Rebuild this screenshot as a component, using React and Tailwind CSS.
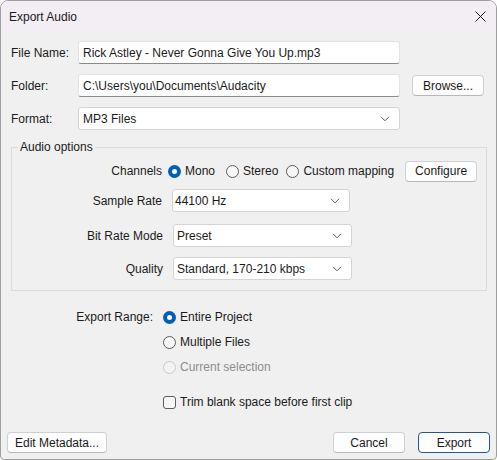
import React from 'react';

const Chevron = () => (
  <svg width="10" height="6" viewBox="0 0 10 6" className="shrink-0">
    <path d="M1 0.8l4 4 4-4" stroke="#5f5f5f" strokeWidth="1" fill="none" />
  </svg>
);

const TextField = ({ value, className = '' }) => (
  <div
    className={`h-[23px] bg-white border border-[#e3e3e3] border-b-[#8a8a8a] rounded-[3px] flex items-center pl-[4px] ${className}`}
  >
    {value}
  </div>
);

const Select = ({ value, className = '', pad = 'pl-[4px] pr-[9px]' }) => (
  <div
    className={`h-[23px] bg-white border border-[#d4d4d4] rounded-[3px] flex items-center justify-between ${pad} ${className}`}
  >
    <span>{value}</span>
    <Chevron />
  </div>
);

const Button = ({ children, className = '', primary = false }) => (
  <button
    className={`h-[21px] rounded-[4px] border flex items-center justify-center leading-none ${
      primary ? 'bg-[#fdfdfd] border-[#1f5a94]' : 'bg-[#fdfdfd] border-[#d0d0d0] border-b-[#b8b8b8]'
    } ${className}`}
  >
    {children}
  </button>
);

const Radio = ({ checked = false, disabled = false }) =>
  checked ? (
    <span className="w-[13px] h-[13px] rounded-full bg-[#005fb8] flex items-center justify-center shrink-0">
      <span className="w-[5px] h-[5px] rounded-full bg-white" />
    </span>
  ) : (
    <span
      className={`w-[13px] h-[13px] rounded-full border shrink-0 ${
        disabled ? 'border-[#c9c9c9] bg-[#f3f3f3]' : 'border-[#5c5c5c] bg-[#f6f6f6]'
      }`}
    />
  );

const RadioItem = ({ label, checked, disabled, className = '' }) => (
  <div className={`flex items-center gap-[4px] whitespace-nowrap ${disabled ? 'text-[#8e8e8e]' : ''} ${className}`}>
    <Radio checked={checked} disabled={disabled} />
    <span>{label}</span>
  </div>
);

export default function App() {
  return (
    <div className="w-[497px] h-[460px] bg-[#f0f0f0] border border-[#9e9e9e] rounded-t-[8px] rounded-b-[4px] overflow-hidden flex flex-col text-[12px] leading-[16px] text-[#1b1b1b] font-['Liberation_Sans',Arial,sans-serif]">
      {/* Title bar */}
      <div className="h-[31px] shrink-0 bg-[#f3eef3] flex items-center justify-between pl-[8px] pr-[10px]">
        <span>Export Audio</span>
        <svg width="11" height="11" viewBox="0 0 11 11">
          <path d="M0.5 0.5l10 10M10.5 0.5l-10 10" stroke="#1b1b1b" strokeWidth="1" />
        </svg>
      </div>

      {/* File name */}
      <div className="flex items-center h-[23px] mt-[9px] pl-[10px]">
        <span className="w-[67px]">File Name:</span>
        <TextField value="Rick Astley - Never Gonna Give You Up.mp3" className="w-[322px]" />
      </div>

      {/* Folder */}
      <div className="flex items-center h-[23px] mt-[10px] pl-[10px]">
        <span className="w-[67px]">Folder:</span>
        <TextField value="C:\Users\you\Documents\Audacity" className="w-[322px]" />
        <Button className="w-[72px] ml-[12px]">Browse...</Button>
      </div>

      {/* Format */}
      <div className="flex items-center h-[23px] mt-[10px] pl-[10px]">
        <span className="w-[67px]">Format:</span>
        <Select value="MP3 Files" className="w-[322px]" />
      </div>

      {/* Audio options */}
      <fieldset className="ml-[10px] w-[476px] h-[152px] mt-[9px] border border-[#dcdcdc] box-border">
        <legend className="ml-[6px] px-[2px]">Audio options</legend>

        <div className="flex items-center h-[20px] mt-[6px] whitespace-nowrap">
          <span className="w-[150px] text-right">Channels</span>
          <RadioItem label="Mono" checked className="ml-[6px]" />
          <RadioItem label="Stereo" className="ml-[11px]" />
          <RadioItem label="Custom mapping" className="ml-[8px]" />
          <Button className="w-[72px] h-[20px] ml-[11px] shrink-0">Configure</Button>
        </div>

        <div className="flex items-center h-[23px] mt-[8px]">
          <span className="w-[150px] text-right">Sample Rate</span>
          <Select value="44100 Hz" className="w-[178px] ml-[10px]" pad="pl-[2px] pr-[9px]" />
        </div>

        <div className="flex items-center h-[23px] mt-[12px]">
          <span className="w-[151px] text-right">Bit Rate Mode</span>
          <Select value="Preset" className="w-[179px] ml-[10px]" pad="pl-[3px] pr-[9px]" />
        </div>

        <div className="flex items-center h-[23px] mt-[10px]">
          <span className="w-[151px] text-right">Quality</span>
          <Select value="Standard, 170-210 kbps" className="w-[179px] ml-[10px]" pad="pl-[3px] pr-[9px]" />
        </div>
      </fieldset>

      {/* Export range */}
      <div className="flex items-center h-[20px] mt-[16px]">
        <span className="w-[152px] text-right">Export Range:</span>
        <RadioItem label="Entire Project" checked className="ml-[10px]" />
      </div>
      <div className="flex items-center h-[20px] mt-[5px] pl-[162px]">
        <RadioItem label="Multiple Files" />
      </div>
      <div className="flex items-center h-[20px] mt-[5px] pl-[162px]">
        <RadioItem label="Current selection" disabled />
      </div>
      <div className="flex items-center gap-[4px] h-[20px] mt-[15px] pl-[162px]">
        <span className="w-[13px] h-[13px] rounded-[3px] border border-[#5c5c5c] bg-[#f6f6f6] shrink-0" />
        <span>Trim blank space before first clip</span>
      </div>

      {/* Bottom buttons */}
      <div className="mt-auto mb-[6px] flex items-center px-[6px]">
        <Button className="w-[100px]">Edit Metadata...</Button>
        <Button className="w-[72px] ml-auto">Cancel</Button>
        <Button primary className="w-[72px] ml-[13px]">Export</Button>
      </div>
    </div>
  );
}
